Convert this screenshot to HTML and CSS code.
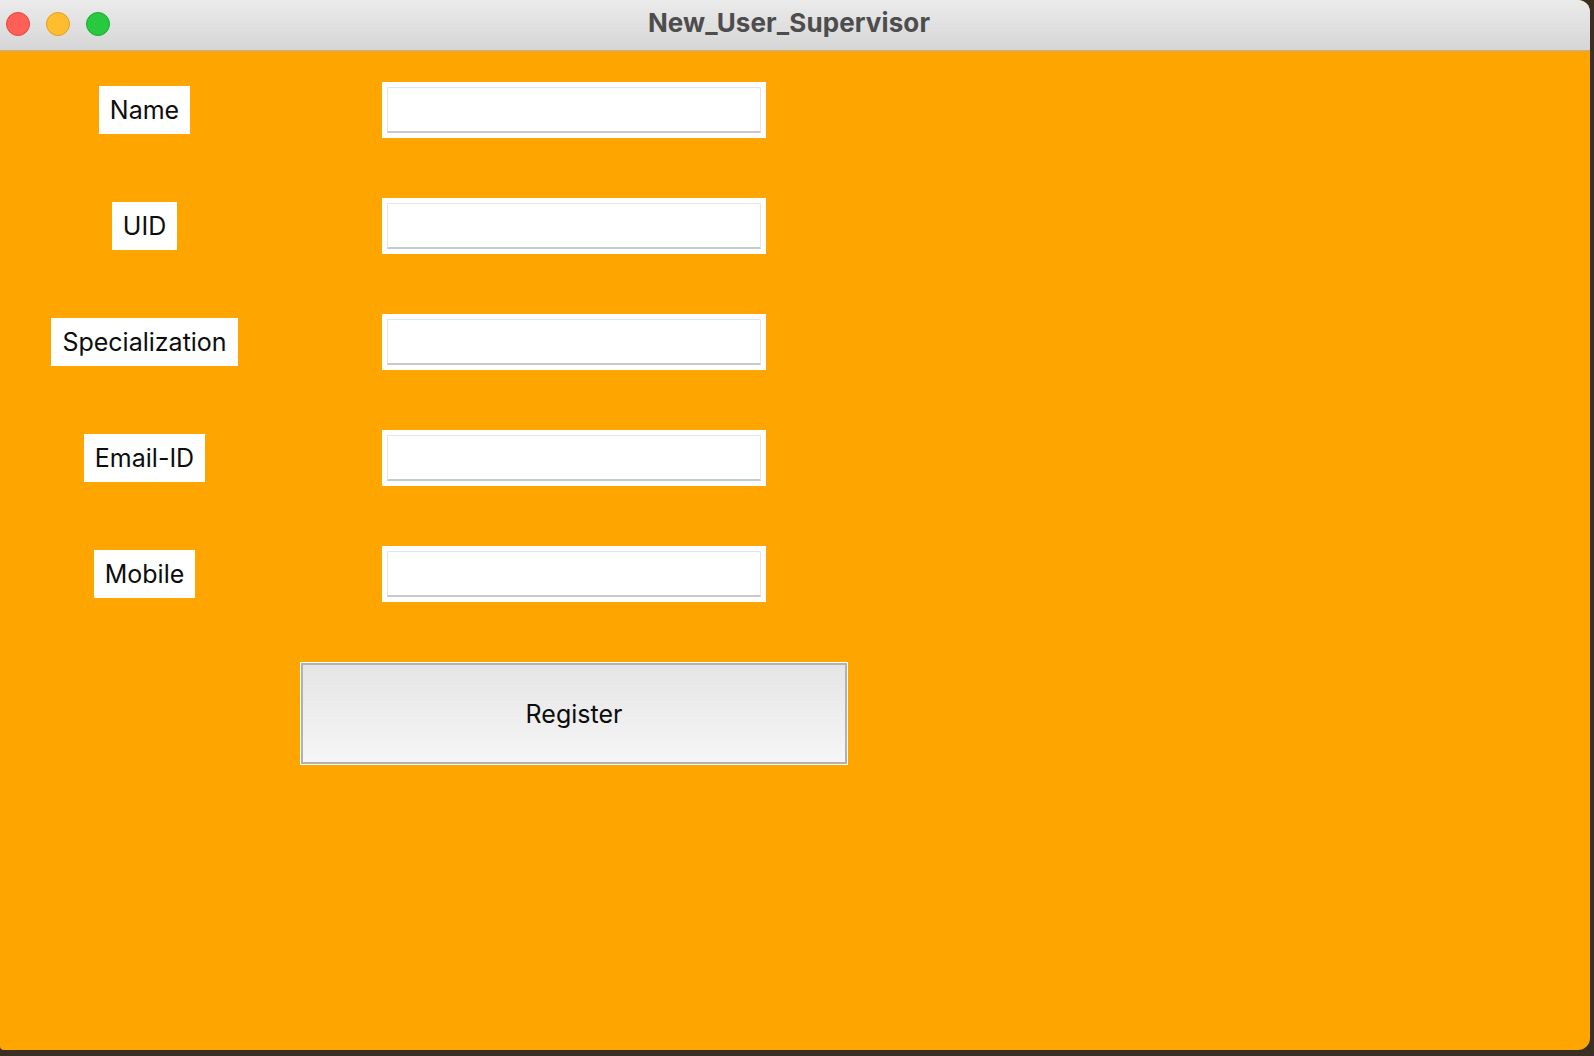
FILE: index.html
```html
<!DOCTYPE html>
<html lang="en">
<head>
<meta charset="utf-8">
<title>New_User_Supervisor</title>
<link rel="stylesheet" href="styles.css">
</head>
<body>
<div class="window">
  <div class="titlebar">
    <div class="lights">
      <span class="light red"></span>
      <span class="light yellow"></span>
      <span class="light green"></span>
    </div>
    <div class="title">New_User_Supervisor</div>
    <div class="spacer"></div>
  </div>
  <div class="content">
    <form class="form">
      <div class="label">Name</div>
      <div class="field"><div class="input"></div></div>
      <div class="label">UID</div>
      <div class="field"><div class="input"></div></div>
      <div class="label">Specialization</div>
      <div class="field"><div class="input"></div></div>
      <div class="label">Email-ID</div>
      <div class="field"><div class="input"></div></div>
      <div class="label">Mobile</div>
      <div class="field"><div class="input"></div></div>
      <div class="button-row"><div class="button">Register</div></div>
    </form>
  </div>
</div>
</body>
</html>
```
FILE: styles.css
```css
html, body {
  margin: 0;
  padding: 0;
  background: #3a2f22;
  width: 1594px;
  height: 1056px;
  overflow: hidden;
}
.window {
  width: 1590px;
  height: 1050px;
  border-radius: 0 12px 12px 4px;
  overflow: hidden;
  background: #ffa500;
  display: flex;
  flex-direction: column;
  font-family: Inter, "Liberation Sans", sans-serif;
}
.titlebar {
  height: 50px;
  border-bottom: 1px solid #b2b2b2;
  background: linear-gradient(#ebebeb, #d6d6d6);
  display: grid;
  grid-template-columns: 1fr auto 1fr;
  align-items: center;
  flex-shrink: 0;
}
.lights {
  display: flex;
  gap: 16px;
  padding-left: 6px;
  padding-bottom: 2px;
}
.light {
  width: 22px;
  height: 22px;
  border-radius: 50%;
  border: 1px solid;
}
.red { background: #ff5f57; border-color: #e2463f; }
.yellow { background: #febc2e; border-color: #e1a116; }
.green { background: #28c840; border-color: #14ae2c; }
.title {
  font-weight: 700;
  font-size: 26px;
  letter-spacing: 0.1px;
  color: #4d4d4d;
  padding-right: 12px;
  padding-bottom: 5px;
}
.content {
  flex: 1;
  padding-top: 31px;
}
.form {
  margin: 0;
  display: grid;
  grid-template-columns: 289px 384px;
  column-gap: 93px;
  row-gap: 60px;
  grid-auto-rows: 56px;
}
.label {
  justify-self: center;
  align-self: center;
  background: #fff;
  height: 48px;
  line-height: 48px;
  padding: 0 11px;
  font-size: 25px;
  color: #0d0d0d;
}
.field {
  background: #fff;
  padding: 5px;
  box-sizing: border-box;
  height: 56px;
}
.input {
  height: 100%;
  box-sizing: border-box;
  border: 1px solid #e6e6e6;
  border-bottom: 2px solid #c9c9c9;
  background: #fff;
}
.button-row {
  grid-column: 1 / -1;
  height: 103px;
  padding-left: 300px;
}
.button {
  width: 548px;
  height: 103px;
  box-sizing: border-box;
  border: 1px solid #fff;
  box-shadow: inset 0 0 0 2px #b1b1b1;
  background: linear-gradient(#e5e5e5, #f6f6f6);
  display: flex;
  align-items: center;
  justify-content: center;
  font-size: 25px;
  color: #0d0d0d;
}
```
